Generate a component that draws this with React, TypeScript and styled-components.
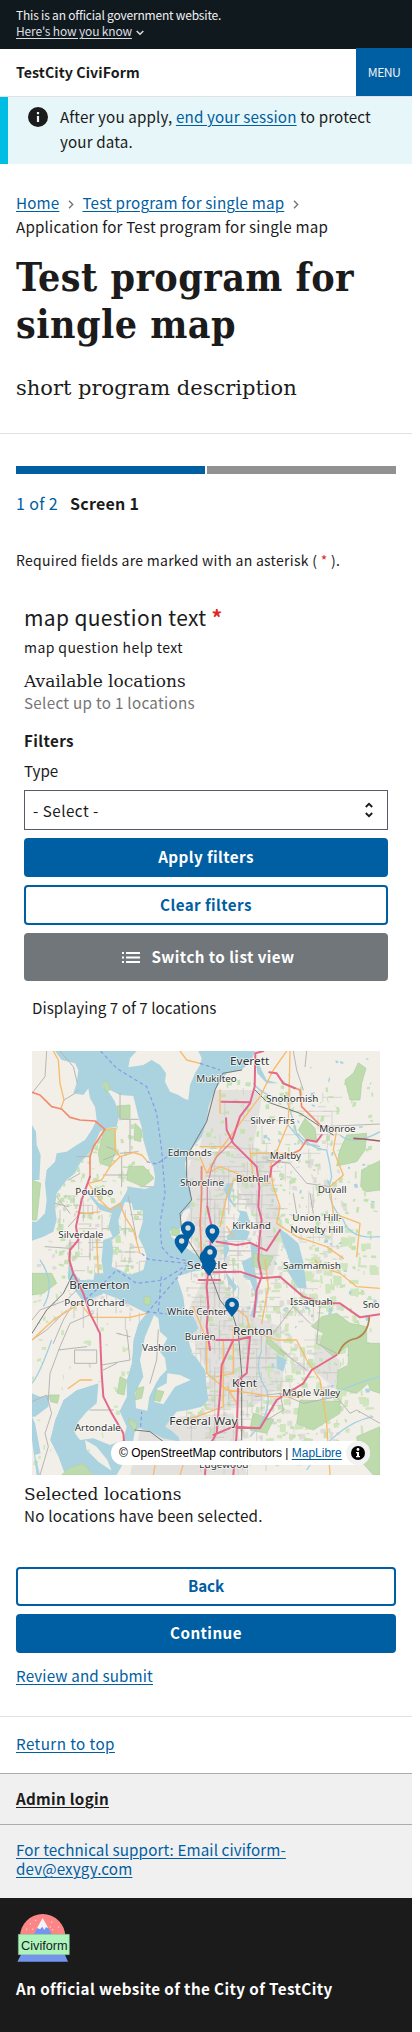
import React from 'react';
import styled, { createGlobalStyle } from 'styled-components';

const BLUE = '#005ea2';
const INK = '#1b1b1b';
const SANS = `"Noto Sans CJK SC", "Noto Sans", sans-serif`;
const SERIF = `"DejaVu Serif", serif`;
const SERIF_NARROW = `"DejaVu Serif Condensed", "DejaVu Serif", serif`;

const GlobalStyle = createGlobalStyle`
  * { box-sizing: border-box; }
  body { margin: 0; background: #fff; color: ${INK}; font-family: ${SANS}; }
  h1, p { margin: 0; font-weight: inherit; }
`;

const Page = styled.div`
  width: 412px;
`;

interface TextProps {
  $size?: number;
  $lh?: number;
  $mt?: number;
  $ls?: number;
  $bold?: boolean;
  $color?: string;
}

const Text = styled.p<TextProps>`
  margin-top: ${p => p.$mt ?? 0}px;
  font-size: ${p => p.$size ?? 15.2}px;
  line-height: ${p => p.$lh ?? 20}px;
  letter-spacing: ${p => p.$ls ?? 0}px;
  font-weight: ${p => (p.$bold ? 700 : 400)};
  color: ${p => p.$color ?? INK};
  white-space: nowrap;
`;

const SerifText = styled(Text)`
  font-family: ${SERIF};
`;

const Title = styled(Text)`
  font-family: ${SERIF_NARROW};
`;

const Link = styled.a<{ $color?: string }>`
  color: ${p => p.$color ?? BLUE};
  text-decoration: underline;
  text-decoration-thickness: 1px;
  text-underline-offset: 2px;
`;

const Banner = styled.div`
  height: 49px;
  padding: 7px 16px 0;
  background: #0f191e;
`;

const BannerChevron = styled.svg`
  margin-left: 4px;
  vertical-align: 0;
`;

const Header = styled.header`
  display: flex;
  justify-content: space-between;
  height: 48px;
  padding-left: 16px;
  border-bottom: 1px solid #dfe1e2;
`;

const MenuButton = styled.button`
  width: 56px;
  height: 48px;
  margin-top: -1px;
  padding: 0;
  border: 0;
  background: ${BLUE};
  color: #f0f0f0;
  font: 400 12.2px/48px ${SANS};
  letter-spacing: -0.6px;
`;

const Alert = styled.div`
  display: flex;
  gap: 12px;
  height: 67px;
  padding: 7px 16px 0 20px;
  border-left: 8px solid #00bde3;
  background: #e7f6f8;
`;

const AlertIcon = styled.span`
  flex: none;
  margin-top: 3px;
  line-height: 0;
`;

const Intro = styled.section`
  height: 270px;
  padding: 26px 16px 0;
  border-bottom: 1px solid #dfe1e2;
`;

const Crumb = styled.span`
  margin-right: 9px;
`;

const CrumbChevron = styled.svg`
  margin: 0 8px 0 0;
`;

const Form = styled.main`
  padding: 32px 16px 0;
`;

const Progress = styled.div`
  display: grid;
  grid-template-columns: 1fr 1fr;
  gap: 2px;
`;

const Segment = styled.div<{ $done?: boolean }>`
  height: 8px;
  background: ${p => (p.$done ? BLUE : '#919191')};
`;

const StepLine = styled.div`
  display: flex;
  gap: 12px;
`;

const Required = styled.span<{ $bold?: boolean }>`
  color: #e12525;
  font-weight: ${p => (p.$bold ? 700 : 400)};
`;

const Question = styled.div`
  padding: 0 8px;
`;

const Select = styled.div`
  display: flex;
  align-items: center;
  justify-content: space-between;
  height: 40px;
  margin-top: 10px;
  padding: 0 13px 1px 8px;
  border: 1px solid #565c65;
`;

const Button = styled.button<{ $kind: 'solid' | 'outline' | 'gray'; $mt?: number; $h?: number; $ls?: number }>`
  display: flex;
  align-items: center;
  justify-content: center;
  gap: 11px;
  width: 100%;
  height: ${p => p.$h ?? 39}px;
  margin-top: ${p => p.$mt ?? 8}px;
  padding: 0 0 3px ${p => (p.$kind === 'gray' ? 5 : 0)}px;
  border: ${p => (p.$kind === 'outline' ? `2px solid ${BLUE}` : '0')};
  border-radius: 4px;
  background: ${p => ({ solid: BLUE, outline: '#fff', gray: '#71767a' })[p.$kind]};
  color: ${p => (p.$kind === 'outline' ? BLUE : '#fff')};
  font: 700 15.2px/20px ${SANS};
  letter-spacing: ${p => p.$ls ?? 0.42}px;
`;

const ListIcon = styled.svg`
  margin-top: 3px;
`;

const MapArea = styled.div`
  padding: 0 8px;
`;

const MapFrame = styled.div`
  position: relative;
  width: 348px;
  height: 424px;
  margin-top: 32px;
  overflow: hidden;
`;

const MapSvg = styled.svg`
  display: block;
`;

const Attribution = styled.div`
  position: absolute;
  right: 10px;
  bottom: 10px;
  display: flex;
  align-items: center;
  justify-content: space-between;
  width: 259px;
  height: 24px;
  padding-left: 8px;
  border-radius: 12px;
  background: #fff;
  color: #000;
  font: 12px/20px "Liberation Sans", sans-serif;
  white-space: nowrap;
`;

const InfoButton = styled.span`
  display: flex;
  align-items: center;
  justify-content: center;
  width: 24px;
  height: 24px;
  border-radius: 12px;
  background: #f2f2f2;
`;

const TopLink = styled.div`
  height: 57px;
  margin-top: 31px;
  padding: 16px 16px 0;
  border-top: 1px solid #dfe1e2;
`;

const FooterRow = styled.div<{ $h: number; $pt?: number }>`
  height: ${p => p.$h}px;
  padding: ${p => p.$pt ?? 14}px 16px 0;
  border-top: 1px solid #a9aeb1;
  background: #f0f0f0;
`;

const Identifier = styled.footer`
  height: 134px;
  padding: 15px 16px 0;
  background: ${INK};
`;

const Logo = styled.svg`
  display: block;
`;

/* ---------- map data ---------- */

type Pt = [number, number];

const WEST_WATER =
  'M105 33L705 33 695 60 665 90 620 100 605 120 585 150 565 200 560 245 545 290 520 320 505 340 495 370 500 410 510 440 515 480 510 500 490 515 480 540 485 565 450 573 455 590 480 612 505 628 530 645 548 668 548 690 515 695 470 710 482 745 490 770 495 810 520 830 535 865 505 895 515 940 530 955 555 990 560 1040 565 1080 545 1100 505 1110 470 1115 450 1140 435 1160 455 1172 475 1190 480 1205 430 1195 400 1180 360 1165 345 1170 340 1200 318 1255 290 1305 135 1305 115 1250 90 1200 105 1140 130 1080 170 1050 235 1030 240 1085 300 1110 320 1070 320 1020 335 970 340 900 355 850 380 820 290 790 240 765 190 785 160 745 130 690 125 640 160 600 110 600 36 610 36 545 50 545 75 520 80 480 75 430 80 390 105 365 110 340 140 335 170 315 195 300 215 270 230 240 225 200 210 175 205 145 190 165 160 160 170 130 175 90 165 70 125 60Z';

const LAND: string[] = [
  'M350 33L535 33 545 55 540 75 525 100 510 135 505 180 490 175 475 165 450 155 435 125 438 100 420 75 395 60 370 75 325 82 330 55Z',
  'M247 128L262 125 270 150 300 165 340 168 348 200 355 230 365 260 370 300 380 335 388 360 400 380 405 410 402 437 375 447 325 440 318 458 300 488 270 505 235 488 205 455 190 440 210 470 240 510 275 520 265 560 278 590 250 600 245 660 250 700 228 700 215 680 200 720 180 720 170 640 150 620 140 760 36 800 36 602 70 590 100 575 110 540 105 500 110 460 140 420 165 400 180 370 215 330 240 275 262 265 290 260 298 225 285 185 268 158 250 140Z',
  'M315 485L335 490 340 510 368 510 368 545 355 590 372 625 380 650 370 690 330 705 300 690 275 680 280 630 275 600 300 580 295 540Z',
  'M150 620L190 610 235 640 220 720 175 715 150 680Z',
  'M36 730L120 700 160 770 190 785 190 810 250 760 290 775 380 820 355 850 340 900 335 970 320 1020 320 1070 300 1110 240 1085 235 1030 170 1050 130 1080 105 1140 90 1200 115 1250 135 1305 36 1305Z',
  'M235 1035L290 1060 300 1115 320 1160 310 1200 270 1215 220 1195 180 1200 165 1180 175 1145 200 1115 230 1090Z',
  'M402 825L415 835 420 875 442 895 420 935 435 955 440 990 420 1010 408 1030 388 1070 382 1112 348 1105 345 1060 370 1010 360 960 375 890 392 850Z',
  'M442 1000L480 1005 512 1020 465 1040 430 1093 403 1085 412 1045 440 1030Z',
  'M195 1200L230 1220 262 1260 275 1292 235 1265 200 1230Z',
  'M145 1285L190 1270 220 1305 125 1305Z',
];

const EXTRA_WATER: string[] = [
  'M36 255L48 275 50 315 62 345 58 420 36 420Z',
  'M620 430L642 428 630 470 650 510 680 515 690 545 665 560 640 562 620 590 628 630 612 665 620 700 655 745 652 775 690 810 685 770 665 740 640 700 690 720 708 770 690 830 705 830 715 770 710 720 700 660 715 625 680 600 690 575 650 560 660 520 625 480 612 450Z',
  'M610 600L690 600 695 650 665 665 675 700 655 730 645 755 625 730 612 680Z',
  'M775 565L800 580 835 610 850 665 860 745 835 745 800 690 815 680 790 610Z',
  'M570 565L600 575 590 600 570 590Z',
  'M36 1060L60 1070 90 1065 85 1100 45 1130 36 1130Z',
  'M36 1130L45 1150 62 1240 45 1245 60 1305 50 1305 36 1200Z',
  'M770 945L800 960 790 995 770 985Z',
  'M620 33L700 33 690 60Z',
  'M705 45L725 90 740 120 775 130 740 130 712 100Z',
];

const GREENS: string[] = [
  'M905 830L950 820 990 850 1040 860 1040 910 1080 910 1080 1060 1050 1050 1045 1030 1010 1060 950 1045 955 990 985 975 985 915 940 950 900 915 910 880 875 860Z',
  'M1010 1190L1080 1160 1080 1305 1060 1305 1020 1260Z',
  'M855 235L885 265 890 300 860 300 835 270Z',
  'M980 285L1040 280 1035 330 1010 365 950 378 960 330Z',
  'M1015 68L1038 85 1025 130 1020 180 990 180 975 120 1000 100Z',
  'M1025 390L1080 362 1080 450 1040 455 1022 440Z',
  'M247 128L262 125 270 150 258 155Z',
  'M290 198L330 195 330 235 300 237Z',
  'M252 268L285 270 288 330 270 380 240 370 235 340Z',
  'M345 250L365 270 362 305 342 300Z',
  'M325 380L370 378 402 415 370 440 320 420Z',
  'M36 420L62 430 50 540 36 540Z',
  'M36 700L95 700 110 730 70 760 36 765Z',
  'M372 770L392 772 390 795 372 792Z',
  'M300 1010L320 1020 312 1065 292 1060Z',
  'M325 1135L352 1150 345 1175 330 1155Z',
  'M90 1065L118 1065 112 1090 92 1085Z',
  'M350 1045L372 1040 365 1075 345 1080Z',
  'M408 1050L432 1055 420 1085 402 1080Z',
  'M740 890L800 940 790 950 740 910Z',
  'M840 1080L960 1085 960 1120 880 1170 830 1150Z',
  'M700 1120L760 1140 740 1180 690 1170Z',
  'M700 640L760 650 740 690 700 680Z',
  'M145 1285L190 1270 220 1305 125 1305Z',
  'M455 560L480 570 475 590 455 585Z',
];

const URBAN: string[] = [
  'M520 340L640 330 680 420 620 430 615 590 600 700 560 710 550 660 490 560 515 500 500 400Z',
  'M550 720L610 720 640 800 780 860 790 1030 700 1100 560 1110 570 1020 520 900 500 820Z',
  'M570 150L730 150 700 320 540 320Z',
  'M640 310L750 340 760 440 790 560 760 700 720 700 715 560 650 430Z',
  'M885 870L905 920 960 960 950 1050 880 990Z',
  'M230 1020L278 1020 278 1065 235 1065Z',
  'M215 760L270 775 265 800 215 800Z',
  'M480 1130L640 1120 680 1305 330 1305 360 1170Z',
];

const MOTORWAYS: string[] = [
  'M730 33L706 40 704 140 690 190 660 230 635 305',
  'M562 500L575 560 568 660 560 740 565 800 560 860 570 930',
  'M605 185L690 187 M618 235L620 270 640 310 680 350 710 380 718 440 715 500 725 540 718 600 715 660 725 710 710 750 702 830',
  'M748 97L770 100 790 130 825 145',
  'M750 410L755 380 780 360 M860 300L890 305 905 285',
  'M590 605L650 615 690 608 740 632 780 570',
  'M580 697L660 695 720 715 780 710 850 770 910 790 960 790 1020 832 1080 823',
  'M210 410L185 480 168 560 175 600 150 630 148 660 160 700 190 760 210 820 240 880 245 1000 250 1070 275 1120 310 1180 312 1205',
  'M536 720L600 720 M580 900L650 900 690 890 680 1000 655 1020 650 1180 640 1305',
  'M640 900L605 975 600 1060 590 1180 560 1230 555 1305',
  'M950 945L875 990 850 1030 770 1080 720 1165 640 1160 580 1185',
];

const THIN_HIGHWAYS: string[] = ['M635 305L590 350 575 380 562 440 562 500'];

const TRUNKS: string[] = [
  'M36 157L60 165 95 200 125 207 150 232 180 240 225 243 255 268 220 320 210 350 210 410',
  'M790 130L840 150 845 200 905 260 M780 360L840 330 860 300',
  'M540 540L545 650 560 700 M545 380L545 460 540 560',
];

const PRIMARIES: string[] = [
  'M100 33L115 60 120 130 132 180 122 207',
  'M255 268L285 265 285 330 300 350 340 338 365 345 380 362',
  'M300 350L270 380 245 420 205 430 M205 430L240 480 270 510 300 490 315 530 340 570 360 640',
  'M168 515L200 520 240 515 M230 600L235 700',
  'M36 900L100 840 180 790 215 832 330 832 380 820',
  'M145 1045L180 1020 215 1020 M480 33L500 60 540 70',
  'M800 33L760 90 720 170 600 330 560 400 M810 33L805 250 780 310 750 380 760 440 780 500 770 550 830 590 920 620 970 655',
  'M600 150L600 220 M540 320L640 320 M540 350L560 400 600 380 700 420 640 420 620 470 600 560',
  'M620 560L640 590 M690 330L700 420 750 430 M690 340L820 340',
  'M950 270L940 330 970 405 930 440 940 520 1020 550 1010 650',
  'M885 660L900 680 960 700 1010 740 1080 745',
  'M640 800L680 830 690 870 770 900 830 900 860 960 900 1020 920 1150 930 1305',
  'M520 800L560 900 560 1000 620 1050 700 1060 750 1070 850 1070',
  'M640 860L640 1000 590 1010 M610 900L610 1100 530 1130 490 1140 M735 660L745 740 725 850',
  'M400 1305L410 1250 M480 1305L500 1240 M620 1040L650 1090',
];

const RAIL: string[] = [
  'M705 150L740 185 840 220 940 285 M665 90L608 100 585 150 560 245 500 350 500 410 515 480 480 520 485 570 545 665 570 700 600 780 640 830 655 880 665 1000 665 1200',
  'M345 1170L390 1175 450 1220 M160 700L130 760 80 810 36 880 M640 1160L720 1165',
];

const MINOR: string[] = [
  'M80 33L75 110 36 160 M132 180L165 160 175 150 M120 33L160 80 172 130',
  'M36 900L80 870 140 810 M115 930L200 920 M85 1080L90 1000 120 920 150 850 220 820 M165 930L230 930 230 970 165 970Z',
  'M100 910L130 840 160 790 M290 880L330 890 M245 975L330 960 320 870 M250 990L290 970 M210 1110L280 1110',
  'M36 1085L80 1065 95 1120 75 1180 85 1220 60 1305 M180 740L140 780 60 810 36 840',
  'M285 330L260 320 M285 345L250 360 M300 160L300 240 M330 240L330 340 M300 340L355 335 M305 238L355 238',
  'M110 470L150 520 M145 420L180 400 M105 490L145 500 M145 560L180 520 220 520 M170 350L210 350 M210 580L210 660',
  'M250 405L320 405 M305 350L305 440 M325 470L350 600 M415 870L410 960 390 1030 M150 600L150 680 M75 620L150 625',
  'M870 850L820 800 760 880 M780 930L860 990 M705 1070L780 1060 790 1110 740 1140',
  'M780 1060L850 1090 950 1070 990 1120 1010 1110 1080 1150 M905 260L1080 252 M900 800L890 910 950 940',
  'M820 33L830 90 850 150 M855 80L860 33 M740 360L810 370 860 430 930 440 M820 460L830 520 M870 460L880 520',
];

const FERRIES =
  'M242 33L290 85 380 140 410 220 425 330 435 460 420 550 425 620 450 650 500 662 M380 365L410 372 450 345 M540 70L600 90 M365 640L385 658 500 670 M195 780L250 730 290 690 350 730 430 720 500 675 M380 820L500 680 M380 815L440 822 M415 815L425 700 M362 1160L365 1115';

interface Label { t: string; x: number; y: number; w: number; s?: number }

const LABELS: Label[] = [
  { t: 'Everett', x: 630, y: 75, w: 118, s: 34 },
  { t: 'Mukilteo', x: 529, y: 125, w: 121 },
  { t: 'Snohomish', x: 738, y: 185, w: 157 },
  { t: 'Silver Firs', x: 691, y: 251, w: 133 },
  { t: 'Monroe', x: 898, y: 275, w: 109 },
  { t: 'Edmonds', x: 443, y: 348, w: 132 },
  { t: 'Maltby', x: 749, y: 357, w: 94 },
  { t: 'Shoreline', x: 480, y: 437, w: 132 },
  { t: 'Bothell', x: 648, y: 425, w: 98 },
  { t: 'Poulsbo', x: 166, y: 464, w: 114 },
  { t: 'Duvall', x: 893, y: 458, w: 87 },
  { t: 'Union Hill-', x: 817, y: 543, w: 148 },
  { t: 'Novelty Hill', x: 811, y: 580, w: 159 },
  { t: 'Kirkland', x: 637, y: 566, w: 116 },
  { t: 'Silverdale', x: 115, y: 593, w: 135 },
  { t: 'Seattle', x: 500, y: 687, w: 123, s: 35 },
  { t: 'Sammamish', x: 789, y: 686, w: 174 },
  { t: 'Bremerton', x: 148, y: 746, w: 181, s: 33 },
  { t: 'Port Orchard', x: 133, y: 799, w: 181 },
  { t: 'White Center', x: 441, y: 825, w: 181 },
  { t: 'Issaquah', x: 810, y: 795, w: 128 },
  { t: 'Sno', x: 1028, y: 804, w: 51 },
  { t: 'Renton', x: 639, y: 884, w: 119, s: 34 },
  { t: 'Burien', x: 494, y: 899, w: 93 },
  { t: 'Vashon', x: 366, y: 934, w: 103 },
  { t: 'Kent', x: 636, y: 1041, w: 75, s: 34 },
  { t: 'Maple Valley', x: 787, y: 1067, w: 174 },
  { t: 'Federal Way', x: 448, y: 1155, w: 205, s: 34 },
  { t: 'Artondale', x: 164, y: 1174, w: 139 },
  { t: 'Edgewood', x: 537, y: 1284, w: 148 },
];

const PINS: { at: Pt; dot: boolean }[] = [
  { at: [504, 602], dot: true },
  { at: [485, 641], dot: true },
  { at: [577, 611], dot: true },
  { at: [560, 688], dot: false },
  { at: [567, 708], dot: false },
  { at: [570, 674], dot: true },
  { at: [636, 831], dot: true },
];

// Small deterministic generator for the fine texture of parks and street grids.
function seeded(seed: number) {
  let s = seed;
  return () => {
    s = (s * 16807) % 2147483647;
    return s / 2147483647;
  };
}

function speckles(seed: number, count: number, box: [number, number, number, number], size: number) {
  const r = seeded(seed);
  let d = '';
  for (let i = 0; i < count; i++) {
    const x = box[0] + r() * box[2];
    const y = box[1] + r() * box[3];
    const w = 3 + r() * size;
    const h = 3 + r() * size;
    d += `M${x.toFixed(0)} ${y.toFixed(0)}l${w.toFixed(0)} ${(r() * 5 - 2).toFixed(0)} ${(r() * 6 - 3).toFixed(0)} ${h.toFixed(0)} ${(-w).toFixed(0)} ${(r() * 6 - 3).toFixed(0)}z`;
  }
  return d;
}

function streets(seed: number, count: number, box: [number, number, number, number], len: number) {
  const r = seeded(seed);
  let d = '';
  for (let i = 0; i < count; i++) {
    const x = box[0] + Math.round((r() * box[2]) / 14) * 14;
    const y = box[1] + Math.round((r() * box[3]) / 14) * 14;
    const l = 20 + r() * len;
    d += r() > 0.5 ? `M${x} ${y}h${l.toFixed(0)}` : `M${x} ${y}v${l.toFixed(0)}`;
  }
  return d;
}

const Routes = ({ d, color, width }: { d: string[]; color: string; width: number }) => (
  <path d={d.join(' ')} fill="none" stroke={color} strokeWidth={width} strokeLinejoin="round" strokeLinecap="round" />
);

const LocationsMap = () => (
  <MapSvg width="348" height="424" viewBox="36 33 1044 1272">
    <rect x="36" y="33" width="1044" height="1272" fill="#f2efe9" />
    <path d={URBAN.join(' ')} fill="#e2e1de" />
    <path d={speckles(7, 330, [500, 300, 470, 900], 16)} fill="#d6d5d2" opacity=".75" />
    <path d={speckles(11, 520, [500, 120, 560, 1150], 14)} fill="#c5e2b4" />
    <path d={speckles(29, 140, [730, 560, 320, 640], 26)} fill="#cfe5bd" />
    <path d={speckles(17, 60, [730, 50, 340, 1000], 9)} fill="#aad3df" />
    <path d={streets(5, 300, [500, 310, 250, 960], 60)} stroke="#c6c5c3" strokeWidth="2" fill="none" />
    <path d={streets(13, 110, [600, 130, 340, 1020], 60)} stroke="#cccbc8" strokeWidth="2" fill="none" />
    <path d={WEST_WATER} fill="#aad3df" />
    <path d={LAND.join(' ')} fill="#f2efe9" />
    <g clipPath="url(#westland)">
      <path d={speckles(3, 210, [100, 250, 280, 500], 14)} fill="#c5e2b4" />
      <path d={speckles(19, 60, [36, 750, 300, 520], 11)} fill="#cde6bc" />
      <path d={speckles(23, 40, [40, 420, 300, 400], 10)} fill="#dcdbd8" />
      <path d={streets(9, 70, [120, 440, 250, 400], 40)} stroke="#bdbcba" strokeWidth="2" fill="none" />
    </g>
    <clipPath id="westland">
      <path d={LAND.join(' ')} />
    </clipPath>
    <path d={EXTRA_WATER.join(' ')} fill="#aad3df" />
    <path d="M632 700L668 706 690 740 688 800 665 800 655 770 658 745Z" fill="#ecebe3" />
    <path d={GREENS.join(' ')} fill="#bedbae" stroke="#a9cfa0" strokeWidth="2" />
    <path
      d="M700 130Q730 170 800 180Q820 240 830 280Q880 330 920 330Q930 370 935 410Q910 480 970 540Q990 600 1080 590 M800 250L850 310 900 320 M960 285Q1000 320 1080 275 M725 930Q700 990 740 1050Q760 1120 690 1190 M900 1080Q1000 1030 1080 1010 M860 1290Q950 1150 1060 1130 M60 660Q110 730 70 800 M95 900Q60 1000 36 1030"
      fill="none"
      stroke="#a3d0e0"
      strokeWidth="4"
    />
    <Routes d={MINOR} color="#b7b6b4" width={3} />
    <Routes d={RAIL} color="#777" width={3} />
    <Routes d={PRIMARIES} color="#f8bb6b" width={4} />
    <path d="M955 943Q970 900 1010 895Q1045 880 1048 830" stroke="#b58350" strokeWidth="5" fill="none" />
    <Routes d={TRUNKS} color="#f38a70" width={5} />
    <Routes d={THIN_HIGHWAYS} color="#d68da4" width={4} />
    <Routes d={MOTORWAYS} color="#e3688a" width={6} />
    <path d="M1000 295L1030 297 1080 303" stroke="#9a5c60" strokeWidth="5" fill="none" />
    <path d={FERRIES} fill="none" stroke="#8799e6" strokeWidth="3.5" strokeDasharray="11 8" />
    <g fontFamily="Noto Sans" fill="#333" stroke="#fff" strokeOpacity=".75" strokeWidth="5" strokeLinejoin="round" paintOrder="stroke">
      {LABELS.map(l => (
        <text key={l.t} x={l.x} y={l.y} fontSize={l.s ?? 29} textLength={l.w} lengthAdjust="spacingAndGlyphs">
          {l.t}
        </text>
      ))}
    </g>
    {PINS.map(({ at: [x, y], dot }) => (
      <g key={`${x}-${y}`} transform={`translate(${x} ${y})`}>
        <path d="M0 0C-6 -9 -21 -23 -21 -37A21 21 0 0 1 21 -37C21 -23 6 -9 0 0Z" fill={BLUE} />
        {dot && <circle cy="-38" r="8" fill="#dcdcdc" />}
      </g>
    ))}
  </MapSvg>
);

const InfoIcon = ({ size, color, hole }: { size: number; color: string; hole: string }) => (
  <svg width={size} height={size} viewBox="0 0 20 20">
    <circle cx="10" cy="10" r="10" fill={color} />
    <path d="M8.9 5h2.2v2.2H8.9zM8.9 9h2.2v6H8.9z" fill={hole} />
  </svg>
);

const BoldInfoIcon = () => (
  <svg width="14" height="14" viewBox="0 0 14 14">
    <circle cx="7" cy="7" r="7" fill="#000" />
    <circle cx="7" cy="3.500" r="1.400" fill="#fff" />
    <path d="M5 6h3v4h1v1.300H5V10h1V7.200H5z" fill="#fff" />
  </svg>
);

const Chevron = () => (
  <CrumbChevron width="6" height="9" viewBox="0 0 6 9">
    <path d="M1 .8l3.7 3.7L1 8.2" fill="none" stroke="#71767a" strokeWidth="1.4" />
  </CrumbChevron>
);

const CiviformLogo = () => (
  <Logo width="55" height="50" viewBox="48 489 165 150">
    <path d="M60 560A67.500 67.500 0 0 1 196 560Z" fill="#fc8585" />
    <path d="M100 555L128 506 157 555Z" fill="#7494f0" />
    <path d="M128 504L145 534 138 532 133 540 127 530 120 538 111 534Z" fill="#f3f3f7" />
    <g fill="#ffd5d5">
      {[[91, 521], [107, 511], [80, 538], [98, 538], [155, 516], [176, 531], [158, 539], [151, 531]].map(([x, y]) => (
        <circle key={`${x}${y}`} cx={x} cy={y} r="2.2" />
      ))}
    </g>
    <path d="M64 612L194 612 204 635 52 635Z" fill="#7494f0" />
    <path d="M55 553h153v61H55z" fill="#aef3bc" stroke="#7dbd8d" strokeWidth="1.500" />
    <text x="63" y="599" fontFamily="Liberation Sans" fontSize="37" textLength="140" lengthAdjust="spacingAndGlyphs" fill="#18241c">
      Civiform
    </text>
  </Logo>
);

export default function App() {
  return (
    <Page>
      <GlobalStyle />
      <Banner>
        <Text $size={12} $lh={16} $ls={-0.2} $color="#f0f0f0">This is an official government website.</Text>
        <Text $size={12} $lh={16} $ls={-0.16} $color="#dcdee0">
          <Link $color="#dcdee0">Here's how you know</Link>
          <BannerChevron width="8" height="6" viewBox="0 0 8 6">
            <path d="M.7 1L4 4.300 7.300 1" fill="none" stroke="#dcdee0" strokeWidth="1.500" />
          </BannerChevron>
        </Text>
      </Banner>
      <Header>
        <Text $size={14.2} $lh={47} $ls={0.08} $bold>TestCity CiviForm</Text>
        <MenuButton>MENU</MenuButton>
      </Header>
      <Alert>
        <AlertIcon><InfoIcon size={20} color={INK} hole="#e7f6f8" /></AlertIcon>
        <Text $lh={25} $ls={0.14}>
          After you apply, <Link>end your session</Link> to protect<br />your data.
        </Text>
      </Alert>
      <Intro>
        <Text as="nav" $lh={24} $ls={0.17}>
          <Crumb><Link>Home</Link></Crumb><Chevron />
          <Crumb><Link>Test program for single map</Link></Crumb><Chevron />
          <br />Application for Test program for single map
        </Text>
        <Title as="h1" $size={39} $lh={47} $mt={16} $ls={0.46} $bold>Test program for<br />single map</Title>
        <SerifText $size={21} $lh={30} $mt={25}>short program description</SerifText>
      </Intro>
      <Form>
        <Progress><Segment $done /><Segment /></Progress>
        <StepLine>
          <Text $size={16} $lh={24} $mt={17} $ls={0.36} $color={BLUE}>1 of 2</Text>
          <Text $size={16} $lh={24} $mt={17} $ls={0.25} $bold>Screen 1</Text>
        </StepLine>
        <Text $size={14} $mt={35} $ls={0.29}>Required fields are marked with an asterisk ( <Required>*</Required> ).</Text>
        <Question>
          <Text $size={21} $lh={30} $mt={32} $ls={0.35}>map question text <Required $bold>*</Required></Text>
          <Text $size={14} $mt={5} $ls={0.42}>map question help text</Text>
          <SerifText $size={17} $mt={14}>Available locations</SerifText>
          <Text $mt={1} $ls={0.3} $color="#757575">Select up to 1 locations</Text>
          <Text $mt={18} $ls={0.4} $bold>Filters</Text>
          <Text $mt={10}>Type</Text>
          <Select>
            <Text $ls={0.5}>- Select -</Text>
            <svg width="10" height="16" viewBox="0 0 10 16">
              <path d="M1.800 5L5 1.800 8.200 5M1.800 11L5 14.200 8.200 11" fill="none" stroke={INK} strokeWidth="1.800" />
            </svg>
          </Select>
          <Button $kind="solid">Apply filters</Button>
          <Button $kind="outline" $h={40}>Clear filters</Button>
          <Button $kind="gray" $h={48}>
            <ListIcon width="18" height="11" viewBox="0 0 18 11">
              <path d="M0 0h2v2H0zM4 0h14v2H4zM0 4.500h2v2H0zM4 4.500h14v2H4zM0 9h2v2H0zM4 9h14v2H4z" fill="#fff" />
            </ListIcon>
            Switch to list view
          </Button>
          <MapArea>
            <Text $mt={14} $lh={24} $ls={0.04}>Displaying 7 of 7 locations</Text>
            <MapFrame>
              <LocationsMap />
              <Attribution>
                <span>© OpenStreetMap contributors | <Link>MapLibre</Link></span>
                <InfoButton><BoldInfoIcon /></InfoButton>
              </Attribution>
            </MapFrame>
          </MapArea>
          <SerifText $size={17} $mt={9}>Selected locations</SerifText>
          <Text $mt={1} $ls={0.22}>No locations have been selected.</Text>
        </Question>
        <Button $kind="outline" $mt={42} $ls={-0.1}>Back</Button>
        <Button $kind="solid">Continue</Button>
        <Text $mt={12} $ls={0.15}><Link>Review and submit</Link></Text>
      </Form>
      <TopLink>
        <Text $ls={0.42}><Link>Return to top</Link></Text>
      </TopLink>
      <FooterRow $h={51}>
        <Text $ls={0.3} $bold><Link $color={INK}>Admin login</Link></Text>
      </FooterRow>
      <FooterRow $h={74} $pt={15}>
        <Text $lh={19} $ls={0.12}><Link>For technical support: Email civiform-<br />dev@exygy.com</Link></Text>
      </FooterRow>
      <Identifier>
        <CiviformLogo />
        <Text $color="#fff" $mt={15} $ls={0.41} $bold>An official website of the City of TestCity</Text>
      </Identifier>
    </Page>
  );
}
